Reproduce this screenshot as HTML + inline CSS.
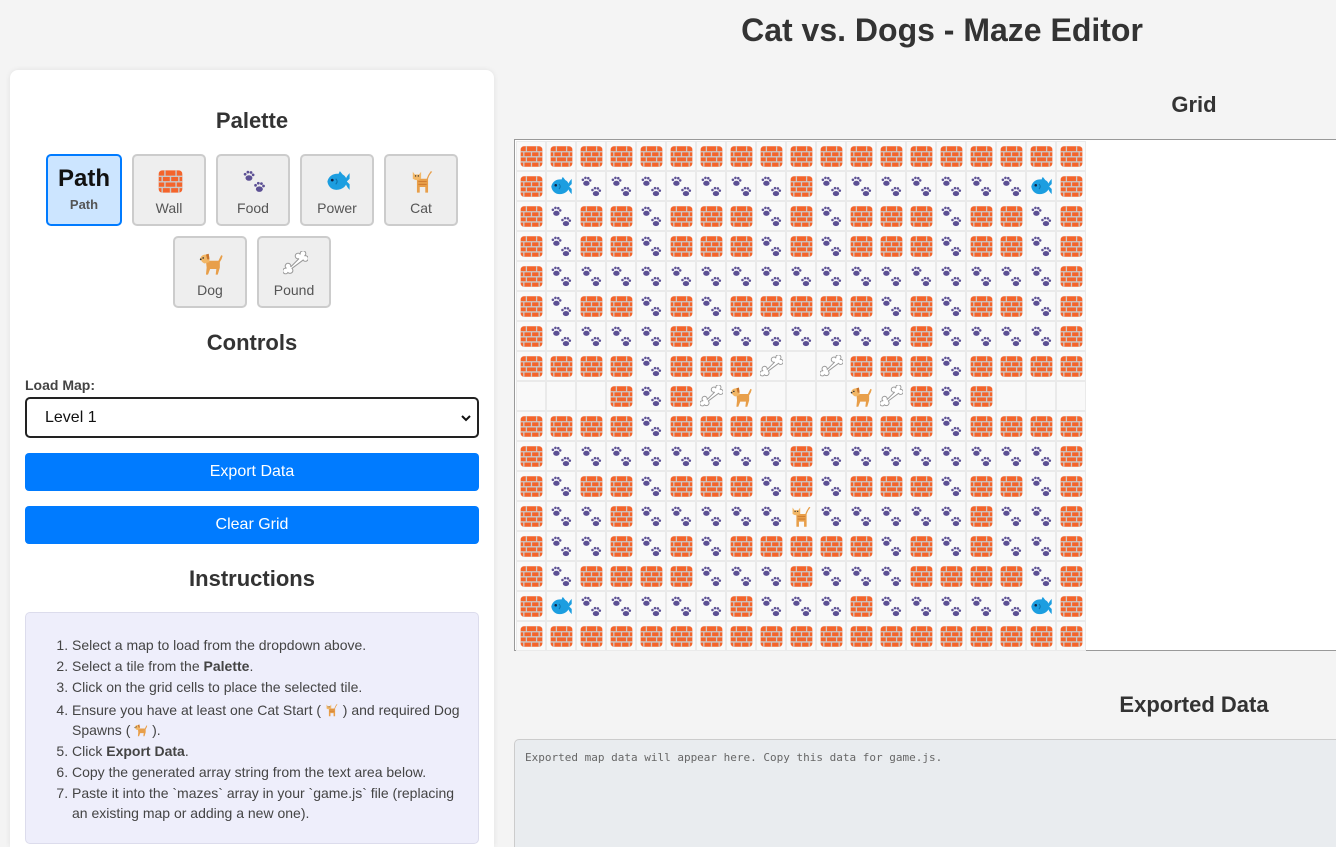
<!DOCTYPE html>
<html><head><meta charset="utf-8"><style>
*{box-sizing:border-box;margin:0;padding:0}
html,body{width:1336px;height:847px;overflow:hidden}
body{background:#f4f4f4;font-family:"Liberation Sans",Arial,sans-serif;color:#333;position:relative}
h1{position:absolute;left:0;width:1884px;top:12px;text-align:center;font-size:32px;font-weight:bold;color:#333}
.card{position:absolute;left:10px;top:70px;width:484px;height:777px;background:#fff;border-radius:8px 8px 0 0;box-shadow:0 0 6px rgba(0,0,0,.08)}
h2{position:absolute;font-size:22px;font-weight:bold;color:#333;text-align:center}
.pb{position:absolute;width:74px;height:72px;background:#eee;border:2px solid #ccc;border-radius:5px;text-align:center;font-size:14px;color:#555}
.pb svg{position:absolute;left:24px;top:13px;width:25px;height:25px}
.pb span{position:absolute;left:0;right:0;top:44px}
.sel{background:#cce5ff;border-color:#007bff}
.lbl{position:absolute;left:25px;top:377px;font-size:14px;font-weight:bold;color:#444}
.selbox{position:absolute;left:25px;top:397px;width:454px;height:41px;border:2px solid #222;border-radius:5px;background:#fff;font-size:16px;color:#111;padding:10px 18px}
.btn{position:absolute;left:25px;width:454px;height:38px;background:#007bff;border-radius:4px;color:#fff;font-size:16px;text-align:center;line-height:38px}
.ins{position:absolute;left:25px;top:612px;width:454px;height:232px;background:#eeeefb;border:1px solid #dcdcec;border-radius:5px}
.ins ol{position:absolute;left:46px;top:22px;width:400px;font-size:14px;color:#444;line-height:20px}
.ins li{margin-bottom:1px}
.grid{position:absolute;left:514px;top:139px;width:900px;height:512px;border:1px solid #999;background:#fff}
.cell{position:absolute;width:30px;height:30px;border:1px solid #eaeaea;background:#f9f9f9}
.cell svg{position:absolute;left:3px;top:3px;width:23px;height:23px}
.ta{position:absolute;left:514px;top:739px;width:900px;height:108px;background:#e9ecef;border:1px solid #ccc;border-bottom:none;border-radius:5px 5px 0 0;font-family:"DejaVu Sans Mono","Liberation Mono",monospace;font-size:11px;color:#666;padding:11px 10px}
</style></head><body>
<svg width="0" height="0" style="position:absolute">
<defs>
<symbol id="w" viewBox="0 0 36 36"><rect x="1" y="2" width="34" height="32" rx="5" fill="#f4642b"/><g stroke="#c9c9c9" stroke-width="2"><path d="M1 10.5H35M1 18.5H35M1 26.5H35M10 2V10.5M26 2V10.5M18 10.5V18.5M6 10.5V18.5M30 10.5V18.5M10 18.5V26.5M26 18.5V26.5M18 26.5V34M6 26.5V34M30 26.5V34"/></g></symbol>
<symbol id="p" viewBox="0 0 36 36"><g fill="#5c5094"><ellipse cx="10" cy="13" rx="5" ry="4"/><circle cx="4.5" cy="7.5" r="2"/><circle cx="8.5" cy="4.5" r="2"/><circle cx="13" cy="5" r="2"/><circle cx="16" cy="8.5" r="2"/><ellipse cx="25" cy="29" rx="5" ry="4"/><circle cx="19.5" cy="23.5" r="2"/><circle cx="23.5" cy="20.5" r="2"/><circle cx="28" cy="21" r="2"/><circle cx="31" cy="24.5" r="2"/></g></symbol>
<symbol id="f" viewBox="0 0 36 36"><path d="M34 6 C30 10 28 14 28 18 C28 22 30 26 34 30 L34 22 L30 18 L34 14Z" fill="#1c9ee0"/><path d="M2 18 C4 9 12 6 18 7 L20 3 L24 8 C28 10 30 14 30 18 C30 24 24 30 15 30 C8 30 3 25 2 18Z" fill="#1c9ee0"/><circle cx="9" cy="16" r="2" fill="#124"/><path d="M14 14 Q18 18 14 22" stroke="#0d6fa8" stroke-width="1.5" fill="none"/></symbol>
<symbol id="c" viewBox="0 0 36 36"><path d="M10 14 L10 34 L14 34 L14 26 L22 26 L22 34 L26 34 L26 14 Q28 8 32 4 L30 3 Q26 8 24 14Z" fill="#e89f4a"/><path d="M4 4 L7 8 L13 8 L16 4 L16 14 Q10 18 4 14Z" fill="#f2b766"/><g stroke="#c9742b" stroke-width="1.2"><path d="M12 18H24M12 22H24"/></g><circle cx="8" cy="10" r="1" fill="#333"/><circle cx="12" cy="10" r="1" fill="#333"/></symbol>
<symbol id="d" viewBox="0 0 36 36"><path d="M10 14 L28 14 Q30 10 32 6 L34 7 Q33 12 30 16 L30 24 L27 34 L24 34 L25 26 L16 26 L13 34 L10 34 L11 24Z" fill="#e89f4a"/><path d="M2 10 Q4 5 10 5 Q15 5 15 10 L15 16 L8 18 Q3 16 2 10Z" fill="#f2b766"/><path d="M10 5 L14 4 L15 12 L12 12Z" fill="#c9742b"/><circle cx="6" cy="10" r="1.2" fill="#333"/><circle cx="2.5" cy="12" r="1.3" fill="#333"/></symbol>
<symbol id="b" viewBox="0 0 36 36"><path d="M7 31 a4 4 0 1 1 -2 -6 a4 4 0 1 1 6 -2 L23 11 a4 4 0 1 1 2 -6 a4 4 0 1 1 6 2 a4 4 0 1 1 -2 6 L13 25 a4 4 0 1 1 -6 6Z" fill="#fff" stroke="#999" stroke-width="1.5"/></symbol>
</defs></svg>

<h1>Cat vs. Dogs - Maze Editor</h1>
<div class="card"></div>
<h2 style="left:10px;width:484px;top:108px">Palette</h2>
<div class="pb sel" style="left:46px;top:154px;width:76px"><div style="position:absolute;left:0;right:0;top:9px;font-size:24px;font-weight:bold;color:#111">Path</div><div style="position:absolute;left:0;right:0;top:41px;font-size:13px;font-weight:bold;color:#555">Path</div></div>
<div class="pb" style="left:132px;top:154px"><svg><use href="#w"/></svg><span>Wall</span></div>
<div class="pb" style="left:216px;top:154px"><svg><use href="#p"/></svg><span>Food</span></div>
<div class="pb" style="left:300px;top:154px"><svg><use href="#f"/></svg><span>Power</span></div>
<div class="pb" style="left:384px;top:154px"><svg><use href="#c"/></svg><span>Cat</span></div>
<div class="pb" style="left:173px;top:236px"><svg><use href="#d"/></svg><span>Dog</span></div>
<div class="pb" style="left:257px;top:236px"><svg><use href="#b"/></svg><span>Pound</span></div>
<h2 style="left:10px;width:484px;top:330px">Controls</h2>
<div class="lbl">Load Map:</div>
<div class="selbox">Level 1<svg style="position:absolute;right:6px;top:15px" width="10" height="8" viewBox="0 0 10 8"><path d="M1 2 L5 6 L9 2" stroke="#111" stroke-width="2" fill="none"/></svg></div>
<div class="btn" style="top:453px">Export Data</div>
<div class="btn" style="top:506px">Clear Grid</div>
<h2 style="left:10px;width:484px;top:566px">Instructions</h2>
<div class="ins"><ol>
<li>Select a map to load from the dropdown above.</li>
<li>Select a tile from the <b>Palette</b>.</li>
<li>Click on the grid cells to place the selected tile.</li>
<li style="margin-top:3px">Ensure you have at least one Cat Start ( <svg width="14" height="14" style="vertical-align:-2px"><use href="#c"/></svg> ) and required Dog Spawns ( <svg width="14" height="14" style="vertical-align:-2px"><use href="#d"/></svg> ).</li>
<li>Click <b>Export Data</b>.</li>
<li>Copy the generated array string from the text area below.</li>
<li>Paste it into the `mazes` array in your `game.js` file (replacing an existing map or adding a new one).</li>
</ol></div>

<h2 style="left:1094px;width:200px;top:92px">Grid</h2>
<div class="grid" id="g"></div>
<h2 style="left:1044px;width:300px;top:692px">Exported Data</h2>
<div class="ta">Exported map data will appear here. Copy this data for game.js.</div>
<script>
var m=["WWWWWWWWWWWWWWWWWWW",
"WF.......W.......FW",
"W.WW.WWW.W.WWW.WW.W",
"W.WW.WWW.W.WWW.WW.W",
"W.................W",
"W.WW.W.WWWWW.W.WW.W",
"W....W.......W....W",
"WWWW.WWWBEBWWW.WWWW",
"EEEW.WBDEEEDBW.WEEE",
"WWWW.WWWWWWWWW.WWWW",
"W........W........W",
"W.WW.WWW.W.WWW.WW.W",
"W..W.....C.....W..W",
"W..W.W.WWWWW.W.W..W",
"W.WWWW...W...WWWW.W",
"WF.....W...W.....FW",
"WWWWWWWWWWWWWWWWWWW"];
var h="",map={W:"w",".":"p",F:"f",C:"c",D:"d",B:"b"};
for(var r=0;r<17;r++)for(var c=0;c<19;c++){var t=m[r][c];h+='<div class="cell" style="left:'+(1+c*30)+'px;top:'+(1+r*30)+'px">'+(map[t]?'<svg><use href="#'+map[t]+'"/></svg>':'')+'</div>';}
document.getElementById("g").innerHTML=h;
</script>
</body></html>
